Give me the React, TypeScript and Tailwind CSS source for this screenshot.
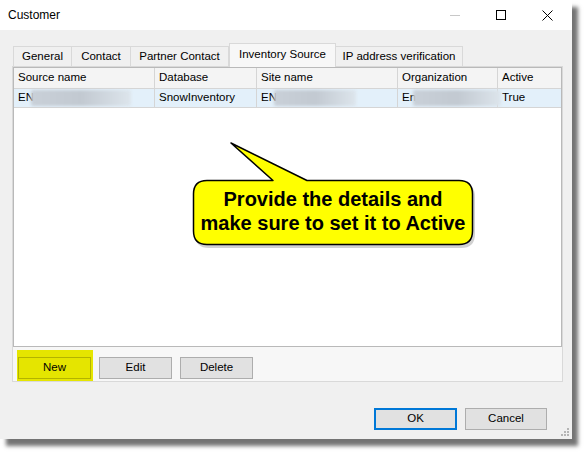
import React from "react";

const tabs = [
  { label: "General", width: "w-[59px]" },
  { label: "Contact", width: "w-[60px]" },
  { label: "Partner Contact", width: "w-[99px]" },
  { label: "Inventory Source", width: "w-[107px]", active: true },
  { label: "IP address verification", width: "w-[128px]" },
];

const columns = [
  { label: "Source name", width: "w-[141px]" },
  { label: "Database", width: "w-[102px]" },
  { label: "Site name", width: "w-[141px]" },
  { label: "Organization", width: "w-[100px]" },
  { label: "Active", width: "flex-1" },
];

const Redacted: React.FC<{ prefix: string; width: string }> = ({ prefix, width }) => (
  <div className="flex items-center">
    <span>{prefix}</span>
    <div
      className={`${width} h-[16px] -ml-[3px] rounded-[2px] blur-[1.5px] bg-gradient-to-r from-[#c9d0d8] via-[#c2c9d1] to-[#dde5ec]`}
    />
  </div>
);

const Button: React.FC<{ label: string; extra?: string }> = ({ label, extra = "" }) => (
  <button
    className={`w-[73px] h-[22px] bg-[#e1e1e1] border border-[#adadad] text-[11.5px] text-black ${extra}`}
  >
    {label}
  </button>
);

const App: React.FC = () => {
  return (
    <div className="relative w-[587px] h-[454px] bg-white overflow-hidden font-['Liberation_Sans',Arial,sans-serif] text-black">
      <div className="relative w-[572px] h-[439px] flex flex-col bg-[#f0f0f0] shadow-[6px_7px_4px_rgba(0,0,0,0.55)]">
        {/* title bar */}
        <div className="h-[30px] bg-white flex items-center pl-[8px] shrink-0">
          <span className="text-[12px]">Customer</span>
          <div className="ml-auto flex items-center h-full">
            <div className="w-[46px] h-full flex items-center justify-center ml-[4px]">
              <div className="w-[10px] h-px bg-[#c8c8c8]" />
            </div>
            <div className="w-[46px] h-full flex items-center justify-center">
              <div className="w-[10px] h-[10px] border border-black" />
            </div>
            <div className="w-[46px] h-full flex items-center justify-center mr-[2px]">
              <svg width="11" height="11" viewBox="0 0 11 11">
                <path d="M0.5 0.5 L10.5 10.5 M10.5 0.5 L0.5 10.5" stroke="#000" strokeWidth="1" />
              </svg>
            </div>
          </div>
        </div>

        {/* body */}
        <div className="flex-1 flex flex-col pt-[14px]">
          <div className="flex items-end h-[23px] pl-[13px] -mb-px relative z-10">
            {tabs.map((t) =>
              t.active ? (
                <div
                  key={t.label}
                  className={`${t.width} h-[24px] bg-[#f7f7f7] border border-b-0 border-[#d9d9d9] flex items-center justify-center text-[11.5px] pb-[2px]`}
                >
                  {t.label}
                </div>
              ) : (
                <div
                  key={t.label}
                  className={`${t.width} h-[21px] bg-[#f0f0f0] border border-[#d9d9d9] -ml-px first:ml-0 flex items-center justify-center text-[11.5px]`}
                >
                  {t.label}
                </div>
              )
            )}
          </div>

          <div className="ml-[12px] w-[551px] h-[316px] border border-[#d9d9d9] bg-[#f7f7f7] flex flex-col">
            {/* list view */}
            <div className="h-[281px] bg-white border border-[#b9b9b9] flex flex-col text-[11.5px]">
              <div className="flex h-[21px] bg-[#f4f4f4] border-b border-[#d5d5d5]">
                {columns.map((c) => (
                  <div
                    key={c.label}
                    className={`${c.width} border-r last:border-r-0 border-[#d5d5d5] pl-[4px] flex items-center`}
                  >
                    {c.label}
                  </div>
                ))}
              </div>
              <div className="flex h-[19px] bg-[#e3f0fa] border-b border-[#d5d5d5]">
                <div className="w-[141px] border-r border-[#d5d5d5] pl-[4px] flex items-center">
                  <Redacted prefix="EN" width="w-[100px]" />
                </div>
                <div className="w-[102px] border-r border-[#d5d5d5] pl-[4px] flex items-center">
                  SnowInventory
                </div>
                <div className="w-[141px] border-r border-[#d5d5d5] pl-[4px] flex items-center">
                  <Redacted prefix="EN" width="w-[82px]" />
                </div>
                <div className="w-[100px] border-r border-[#d5d5d5] pl-[4px] flex items-center">
                  <Redacted prefix="En" width="w-[88px]" />
                </div>
                <div className="flex-1 pl-[4px] flex items-center">True</div>
              </div>
            </div>

            {/* buttons */}
            <div className="flex items-end gap-[6px] pl-[4px] pt-[3px]">
              <div className="bg-[#e5e500] pl-[1px] pr-[2px] pt-[4px] pb-[2px]">
                <Button label="New" extra="bg-[#e5e500] border-[#b3b300]" />
              </div>
              <div className="pb-[2px] flex gap-[8px]">
                <Button label="Edit" />
                <Button label="Delete" />
              </div>
            </div>
          </div>

          <div className="flex justify-end gap-[8px] pr-[25px] mt-[26px]">
            <button className="w-[83px] h-[22px] bg-[#e1e1e1] border-2 border-[#0078d7] text-[11.5px]">
              OK
            </button>
            <button className="w-[82px] h-[22px] bg-[#e1e1e1] border border-[#adadad] text-[11.5px]">
              Cancel
            </button>
          </div>
        </div>

        {/* size grip */}
        <svg className="absolute right-[2px] bottom-[2px]" width="9" height="9" viewBox="0 0 9 9">
          <g fill="#b5b5b5">
            <rect x="6" y="0" width="2" height="2" />
            <rect x="3" y="3" width="2" height="2" />
            <rect x="6" y="3" width="2" height="2" />
            <rect x="0" y="6" width="2" height="2" />
            <rect x="3" y="6" width="2" height="2" />
            <rect x="6" y="6" width="2" height="2" />
          </g>
        </svg>
      </div>

      {/* callout */}
      <svg className="absolute left-0 top-0" width="587" height="454" viewBox="0 0 587 454">
        <path
          d="M209 183 L275 183 L233 146 L309 183 L461 183 Q475 183 475 197 L475 234 Q475 248 461 248 L209 248 Q195 248 195 234 L195 197 Q195 183 209 183 Z"
          fill="rgba(0,0,0,0.18)"
        />
        <path
          d="M207 180.5 L273 180.5 L231 143 L307 180.5 L459 180.5 Q472.5 180.5 472.5 194 L472.5 231 Q472.5 244.5 459 244.5 L207 244.5 Q193.5 244.5 193.5 231 L193.5 194 Q193.5 180.5 207 180.5 Z"
          fill="#ffff00"
          stroke="#000"
          strokeWidth="1.5"
          strokeLinejoin="round"
        />
      </svg>
      <div className="absolute left-[193px] top-[178px] w-[280px] h-[65px] flex flex-col items-center justify-center font-['Liberation_Sans',Arial,sans-serif] font-bold text-[20px] leading-[24px] text-black">
        <span>Provide the details and</span>
        <span>make sure to set it to Active</span>
      </div>
    </div>
  );
};

export default App;
